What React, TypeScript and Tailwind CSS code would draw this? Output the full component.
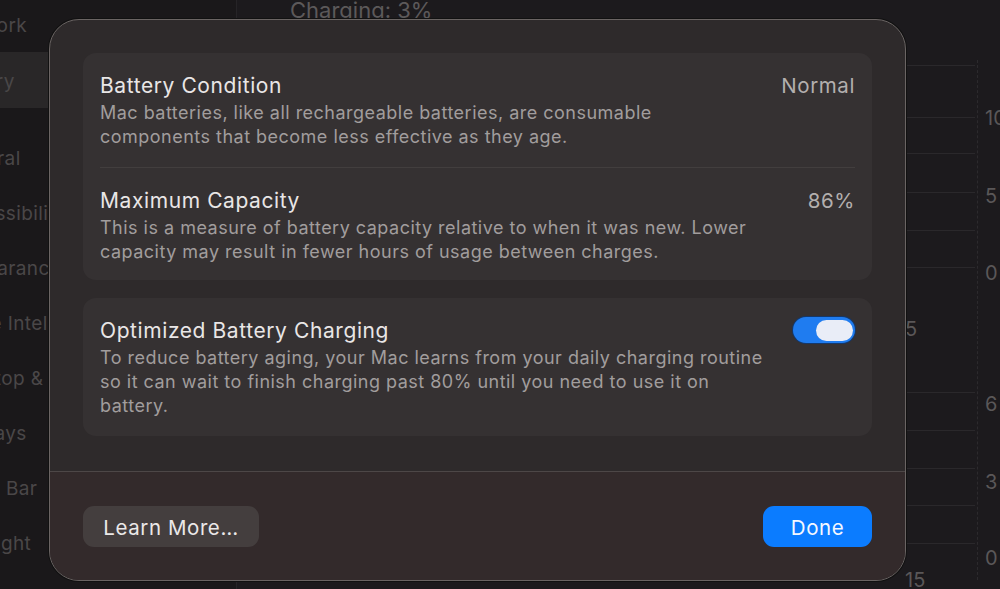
import { Fragment } from "react";

const sidebar = [
  { label: "Network", h: "h-[52px]", first: true },
  { label: "Battery", h: "h-[56px]", selected: true, gapAfter: true },
  { label: "General" },
  { label: "Accessibility" },
  { label: "Appearance" },
  { label: "Apple Intelligence & Siri" },
  { label: "Desktop & Dock" },
  { label: "Displays" },
  { label: "Menu Bar" },
  { label: "Spotlight" },
];

const gridLines = [65, 117, 153, 192, 230, 267, 392, 430, 468, 505, 543];
const axisLabels = [
  { text: "10", y: 118 },
  { text: "5", y: 196 },
  { text: "0", y: 273 },
  { text: "6", y: 404 },
  { text: "3", y: 482 },
  { text: "0", y: 558 },
];

function Sidebar() {
  return (
    <aside className="w-[237px] shrink-0 overflow-hidden border-r border-[#262427] bg-[#1a181a]">
      {sidebar.map((item) => (
        <Fragment key={item.label}>
          <div
            className={`flex ${item.h ?? "h-[55px]"} items-center whitespace-nowrap text-[19px] tracking-[0.02em] text-[#4a4748] ${
              item.selected ? "bg-[#292728]" : ""
            }`}
          >
            <span className={`-ml-[52px] ${item.first ? "" : "mt-[5px]"}`}>{item.label}</span>
          </div>
          {item.gapAfter ? <div className="h-[21px]" /> : null}
        </Fragment>
      ))}
    </aside>
  );
}

function Chart() {
  return (
    <main className="relative flex-1 bg-[#1c1a1d]">
      <div className="-mt-[6px] pl-[53px] text-[22px] text-[#5c595a]">Charging: 3%</div>
      {gridLines.map((y) => (
        <div key={y} className="absolute left-[620px] w-[118px] border-t border-[#2a282b]" style={{ top: y }} />
      ))}
      <div className="absolute left-[740px] top-[60px] h-[520px] border-l border-dashed border-[#2c2a2d]" />
      {axisLabels.map((l, i) => (
        <div key={i} className="absolute left-[748px] text-[20px] leading-none text-[#5a5758]" style={{ top: l.y - 10 }}>
          {l.text}
        </div>
      ))}
      <div className="absolute left-[668px] top-[319px] text-[20px] leading-none text-[#5a5758]">5</div>
      <div className="absolute left-[668px] top-[570px] text-[20px] leading-none text-[#5a5758]">15</div>
    </main>
  );
}

function Toggle() {
  return (
    <div className="flex h-[26px] w-[62px] shrink-0 items-center justify-end rounded-full bg-[#1f7cf0] pr-[2px] ring-1 ring-[#15386a]">
      <div className="h-[21px] w-[37px] rounded-full bg-[#e9edf7]" />
    </div>
  );
}

function Value({ children }: { children: React.ReactNode }) {
  return <span className="whitespace-nowrap pt-[1px] text-[20.5px] leading-[28px] tracking-[0.028em] text-[#b3afae]">{children}</span>;
}

function Row({ title, value, children }: { title: string; value?: React.ReactNode; children: React.ReactNode }) {
  return (
    <div className="flex items-start justify-between gap-4">
      <div>
        <div className="pt-[1px] text-[21px] leading-[28px] tracking-[0.028em] text-[#e9e6e6]">{title}</div>
        <p className="mt-[1px] whitespace-nowrap text-[18px] leading-[24px] tracking-[0.027em] text-[#a19d9d]">{children}</p>
      </div>
      {value}
    </div>
  );
}

function BatteryDialog() {
  return (
    <div className="absolute left-[49px] top-[19px] flex h-[562px] w-[857px] flex-col overflow-hidden rounded-[30px] border border-[#6a6463] bg-[#2e2a2b] shadow-[0_0_0_1px_#111]">
      <div className="flex-1 px-[33px] pt-[33px]">
        <section className="rounded-[13px] bg-[#353132] px-[17px] pb-[16px] pt-[18px]">
          <Row title="Battery Condition" value={<Value>Normal</Value>}>
            Mac batteries, like all rechargeable batteries, are consumable
            <br />
            components that become less effective as they age.
          </Row>
          <div className="my-[18px] border-t border-[#423e3e]" />
          <Row title="Maximum Capacity" value={<Value>86%</Value>}>
            This is a measure of battery capacity relative to when it was new. Lower
            <br />
            capacity may result in fewer hours of usage between charges.
          </Row>
        </section>
        <section className="mt-[18px] rounded-[13px] bg-[#353132] px-[17px] pb-[18px] pt-[18px]">
          <Row title="Optimized Battery Charging" value={<div className="pt-[1px]"><Toggle /></div>}>
            To reduce battery aging, your Mac learns from your daily charging routine
            <br />
            so it can wait to finish charging past 80% until you need to use it on
            <br />
            battery.
          </Row>
        </section>
      </div>
      <footer className="flex h-[109px] items-start justify-between border-t border-[#4d4747] bg-[#332a2b] px-[33px] pt-[34px]">
        <button
          type="button"
          className="h-[41px] w-[176px] rounded-[11px] bg-[#443e3e] pt-[4px] text-[20.5px] tracking-[0.028em] text-[#ebe8e8]"
        >
          Learn More…
        </button>
        <button
          type="button"
          className="h-[41px] w-[109px] rounded-[11px] bg-[#0b7cff] pt-[4px] text-[20.5px] tracking-[0.028em] text-[#f4f8ff]"
        >
          Done
        </button>
      </footer>
    </div>
  );
}

export default function App() {
  return (
    <div
      className="relative flex h-[589px] w-[1000px] overflow-hidden bg-[#1c1a1d]"
      style={{ fontFamily: "Inter, 'Noto Sans', sans-serif" }}
    >
      <Sidebar />
      <Chart />
      <BatteryDialog />
    </div>
  );
}
